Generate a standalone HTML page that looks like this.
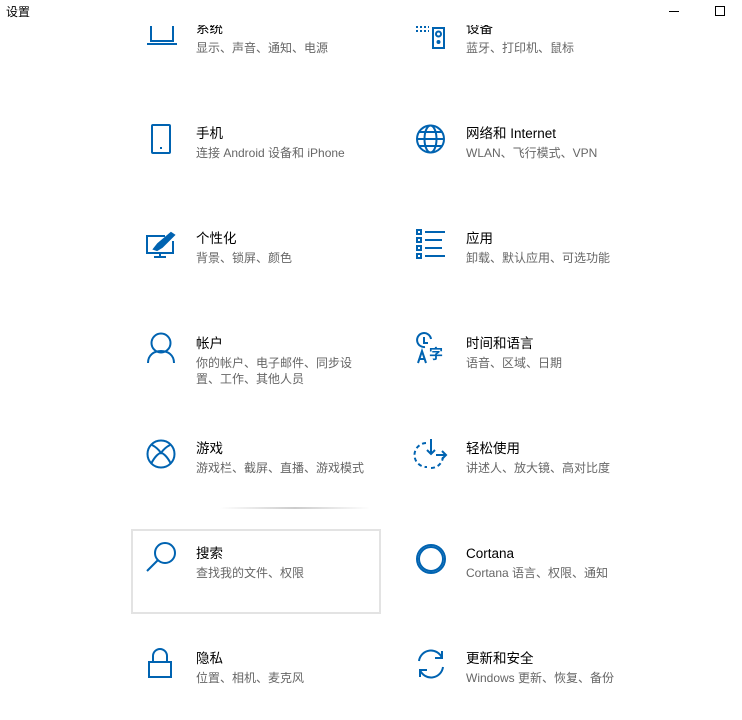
<!DOCTYPE html>
<html><head><meta charset="utf-8"><style>
body{margin:0;width:742px;height:720px;background:#fff;overflow:hidden;font-family:"Liberation Sans","Noto Sans CJK SC",sans-serif;position:relative}
.clip{position:absolute;left:0;top:25px;width:742px;height:695px;overflow:hidden}
.t{position:absolute;font-size:13.5px;color:#000;white-space:nowrap;line-height:18px}
.s{position:absolute;font-size:12px;color:#666;white-space:nowrap;line-height:16px}
svg{position:absolute;overflow:visible}
svg *{stroke:#0063b1;fill:none;stroke-width:2}
</style></head><body>
<div style="position:absolute;left:6px;top:3px;font-size:12px;color:#000">设置</div>
<div style="position:absolute;left:669px;top:11px;width:10px;height:1px;background:#000"></div>
<div style="position:absolute;left:715px;top:6px;width:8px;height:8px;border:1px solid #000"></div>
<div class="clip">
<div style="position:absolute;top:0;left:0;width:742px;height:695px;transform:translateY(-25px)">
<svg style="left:147px;top:26px" width="30" height="30"><path d="M4 0V15H26V0M0 18H30"/></svg>
<div class="t" style="left:196px;top:20px">系统</div>
<div class="s" style="left:196px;top:40px">显示、声音、通知、电源</div>
<svg style="left:416px;top:20px" width="30" height="30"><path d="M17 8H28V28H17Z"/><circle cx="22.5" cy="14" r="2.5"/><circle cx="22.5" cy="22" r="1"/><path d="M0 7H13M0 11H13" stroke-dasharray="2 2"/></svg>
<div class="t" style="left:466px;top:20px">设备</div>
<div class="s" style="left:466px;top:40px">蓝牙、打印机、鼠标</div>

<svg style="left:151px;top:124px" width="30" height="30"><rect x="1" y="1" width="18" height="28" rx="1"/><path d="M9 24H11"/></svg>
<div class="t" style="left:196px;top:125px">手机</div>
<div class="s" style="left:196px;top:145px">连接 Android 设备和 iPhone</div>
<svg style="left:416px;top:124px" width="30" height="30"><circle cx="14.5" cy="15" r="13.5"/><ellipse cx="14.5" cy="15" rx="6" ry="13.5"/><path d="M1 15H28M3 8H26M3 22H26"/></svg>
<div class="t" style="left:466px;top:125px">网络和 Internet</div>
<div class="s" style="left:466px;top:145px">WLAN、飞行模式、VPN</div>

<svg style="left:146px;top:232px" width="30" height="30"><path d="M19 4H1V21H27V9M8 25H20M14 21V25"/><path d="M8 17L12 12L25 1L28 3L16 15L11 18Z" stroke-width="2" style="fill:#0063b1"/></svg>
<div class="t" style="left:196px;top:230px">个性化</div>
<div class="s" style="left:196px;top:250px">背景、锁屏、颜色</div>
<svg style="left:416px;top:229px" width="30" height="30"><path d="M1 1h4v4h-4zM1 9h4v4h-4zM1 17h4v4h-4zM1 25h4v4h-4zM9 3H29M9 11H26M9 19H26M9 27H29"/></svg>
<div class="t" style="left:466px;top:230px">应用</div>
<div class="s" style="left:466px;top:250px">卸载、默认应用、可选功能</div>

<svg style="left:148px;top:333px" width="30" height="30"><circle cx="13" cy="10" r="9.5"/><path d="M0 30C0 22 6 18 13 18S26 22 26 30"/></svg>
<div class="t" style="left:196px;top:335px">帐户</div>
<div class="s" style="left:196px;top:355px">你的帐户、电子邮件、同步设</div>
<div class="s" style="left:196px;top:371px">置、工作、其他人员</div>
<svg style="left:416px;top:334px" width="30" height="30"><path d="M9 13A7 7 0 1 1 15 5M8 3V9H12"/><path d="M2 29L6 17L10 29M3.5 25H8.5" stroke-width="1.8"/><text x="13" y="25" style="fill:#0063b1;stroke:none;font-size:14px;font-family:'Noto Sans CJK SC';font-weight:bold">字</text></svg>
<div class="t" style="left:466px;top:335px">时间和语言</div>
<div class="s" style="left:466px;top:355px">语音、区域、日期</div>

<svg style="left:146px;top:439px" width="30" height="30"><circle cx="15" cy="15" r="13.5" stroke-width="2.5"/><path d="M5 25C9 17 13 14 15 14S21 17 25 25M6 6C10 8 13 11 15 14C17 11 20 8 24 6" stroke-width="3.5"/></svg>
<div class="t" style="left:196px;top:440px">游戏</div>
<div class="s" style="left:196px;top:460px">游戏栏、截屏、直播、游戏模式</div>
<svg style="left:416px;top:439px" width="30" height="30"><path d="M10 4A12 12 0 0 0 11 28M15 29A12 12 0 0 0 27 18" stroke-dasharray="4 3"/><path d="M15 0V15M11 11L15 15L19 11M20 16H30M26 12L30 16L26 20"/></svg>
<div class="t" style="left:466px;top:440px">轻松使用</div>
<div class="s" style="left:466px;top:460px">讲述人、放大镜、高对比度</div>

<div style="position:absolute;left:220px;top:507px;width:150px;height:2px;background:linear-gradient(90deg,#fff,#ccc,#fff)"></div>
<div style="position:absolute;left:131px;top:529px;width:246px;height:81px;border:2px solid #e3e3e3"></div>
<svg style="left:146px;top:543px" width="30" height="30"><circle cx="19" cy="10" r="10"/><path d="M12 17L1 28"/></svg>
<div class="t" style="left:196px;top:545px">搜索</div>
<div class="s" style="left:196px;top:565px">查找我的文件、权限</div>
<svg style="left:416px;top:544px" width="30" height="30"><circle cx="15" cy="15" r="12" stroke-width="4"/><circle cx="15" cy="15" r="14" stroke="#9cc3e6" stroke-width="1"/></svg>
<div class="t" style="left:466px;top:545px">Cortana</div>
<div class="s" style="left:466px;top:565px">Cortana 语言、权限、通知</div>

<svg style="left:148px;top:648px" width="30" height="30"><path d="M5 13V8A7 7 0 0 1 19 8V13"/><rect x="1" y="14" width="22" height="15"/></svg>
<div class="t" style="left:196px;top:650px">隐私</div>
<div class="s" style="left:196px;top:670px">位置、相机、麦克风</div>
<svg style="left:416px;top:649px" width="30" height="30"><path d="M3 12A12 12 0 0 1 26 9M27 18A12 12 0 0 1 4 21M26 2V9H19M4 28V21H11"/></svg>
<div class="t" style="left:466px;top:650px">更新和安全</div>
<div class="s" style="left:466px;top:670px">Windows 更新、恢复、备份</div>
</div></div>
</body></html>
